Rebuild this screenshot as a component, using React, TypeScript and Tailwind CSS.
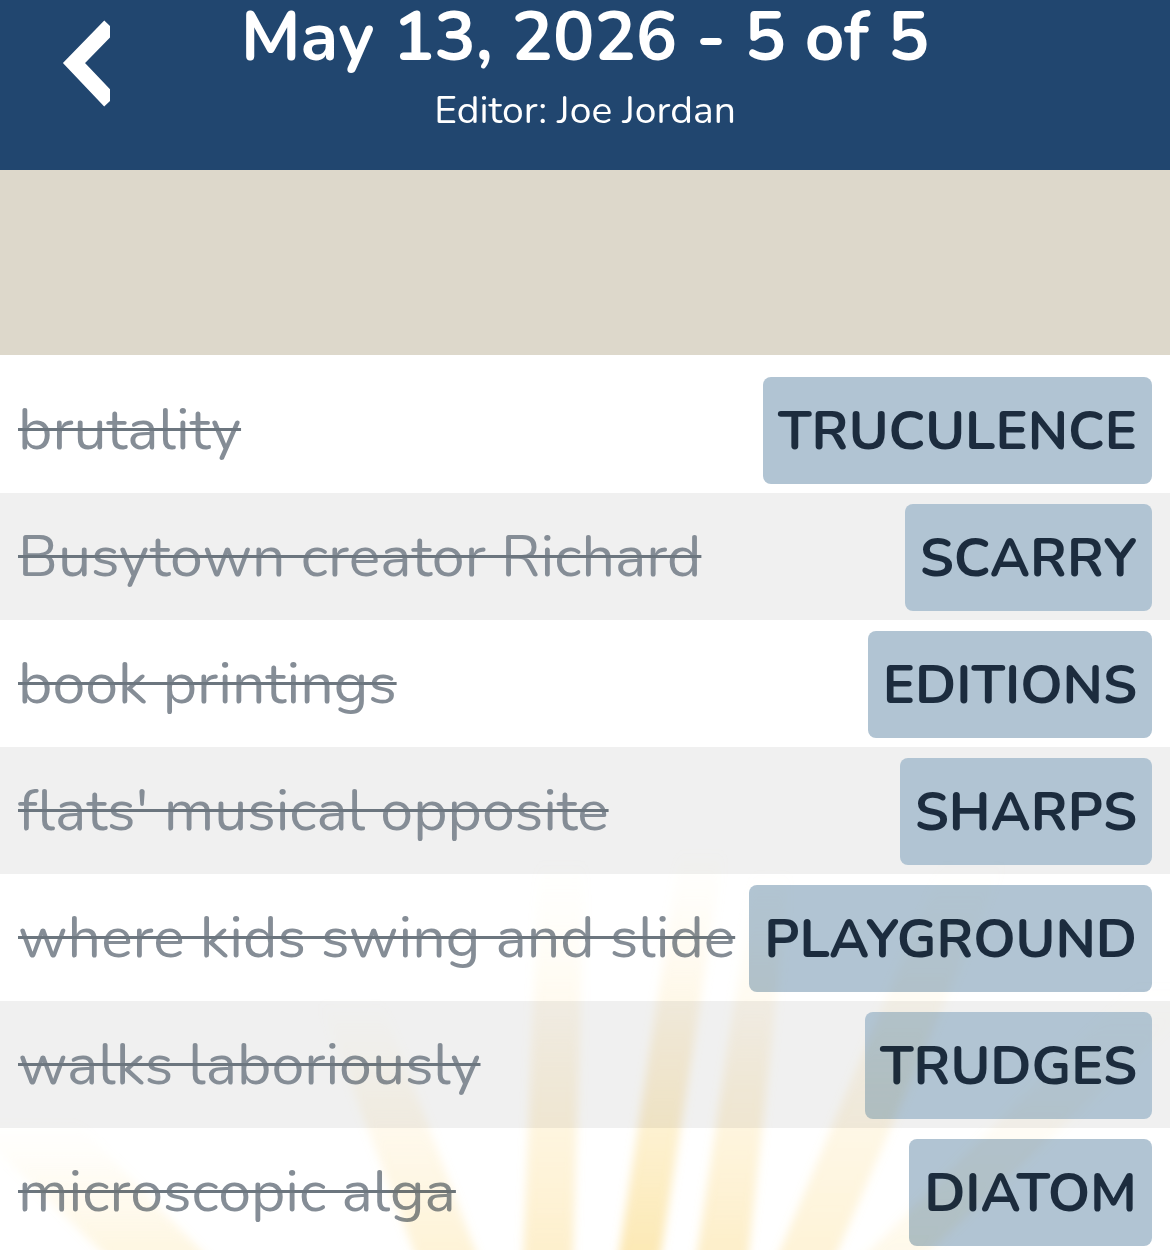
import React from "react";

type Entry = {
  clue: string;
  answer: string;
};

const entries: Entry[] = [
  { clue: "brutality", answer: "TRUCULENCE" },
  { clue: "Busytown creator Richard", answer: "SCARRY" },
  { clue: "book printings", answer: "EDITIONS" },
  { clue: "flats' musical opposite", answer: "SHARPS" },
  { clue: "where kids swing and slide", answer: "PLAYGROUND" },
  { clue: "walks laboriously", answer: "TRUDGES" },
  { clue: "microscopic alga", answer: "DIATOM" },
];

// sunburst beams: [bottom x, bottom width, top x, top width, top y, strength]
const beams: [number, number, number, number, number, number][] = [
  [160, 100, 20, 110, 1120, 0.22],
  [448, 62, 350, 62, 1000, 0.3],
  [548, 50, 562, 46, 860, 0.38],
  [639, 42, 702, 44, 850, 0.55],
  [722, 52, 772, 36, 870, 0.4],
  [805, 58, 975, 62, 860, 0.3],
  [890, 60, 1180, 80, 980, 0.15],
];

function BackChevron() {
  return (
    <svg width="60" height="130" viewBox="50 0 60 130" className="block">
      <polyline
        points="110,26 74,63 110,101"
        fill="none"
        stroke="white"
        strokeWidth="16"
        strokeLinejoin="miter"
        strokeLinecap="butt"
      />
    </svg>
  );
}

function Sunburst() {
  return (
    <svg
      className="absolute inset-0 pointer-events-none mix-blend-multiply"
      width="1170"
      height="1250"
      viewBox="0 0 1170 1250"
    >
      <defs>
        <filter id="soft" x="-20%" y="-20%" width="140%" height="140%">
          <feGaussianBlur stdDeviation="5" />
        </filter>
        {beams.map(([, , , , topY, k], i) => (
          <linearGradient key={i} id={`beam${i}`} gradientUnits="userSpaceOnUse" x1="0" y1="1250" x2="0" y2={topY}>
            <stop offset="0" stopColor="#fad77a" stopOpacity={k} />
            <stop offset="0.5" stopColor="#fbe09a" stopOpacity={k * 0.6} />
            <stop offset="1" stopColor="#fdecc0" stopOpacity="0" />
          </linearGradient>
        ))}
      </defs>
      <g filter="url(#soft)">
        {beams.map(([bx, bw, tx, tw, topY], i) => (
          <polygon
            key={i}
            points={`${bx - bw / 2},1260 ${bx + bw / 2},1260 ${tx + tw / 2},${topY} ${tx - tw / 2},${topY}`}
            fill={`url(#beam${i})`}
          />
        ))}
      </g>
    </svg>
  );
}

function Row({ entry, shaded }: { entry: Entry; shaded: boolean }) {
  return (
    <div
      className={`h-[127px] flex items-start justify-between pl-[18px] pr-[18px] ${
        shaded ? "bg-[#f0f0f0]" : "bg-white"
      }`}
    >
      <div className="h-full flex items-center">
        <span className="text-[59px] leading-none text-[#858d96] line-through decoration-[#6c767f] decoration-[3px] whitespace-nowrap">
          {entry.clue}
        </span>
      </div>
      <div className="mt-[11px] h-[107px] px-[15px] flex items-center rounded-[8px] bg-[#b1c4d3] shrink-0">
        <span className="text-[54px] leading-none font-bold text-[#1c2c3e] whitespace-nowrap">
          {entry.answer}
        </span>
      </div>
    </div>
  );
}

export default function App() {
  return (
    <div className="relative w-[1170px] h-[1250px] overflow-hidden bg-white font-['Nunito','Open_Sans',sans-serif]">
      <div className="relative h-[170px] bg-[#21466f] flex flex-col items-center text-white">
        <div className="absolute left-[50px] top-0">
          <BackChevron />
        </div>
        <h1 className="text-[69px] font-bold leading-[1.1]">May 13, 2026 - 5 of 5</h1>
        <p className="text-[39px] leading-none mt-[15px]">Editor: Joe Jordan</p>
      </div>

      <div className="h-[185px] bg-[#ddd8cb]" />

      <div className="bg-white pt-[11px]">
        {entries.map((e, i) => (
          <Row key={e.answer} entry={e} shaded={i % 2 === 1} />
        ))}
      </div>

      <Sunburst />
    </div>
  );
}
